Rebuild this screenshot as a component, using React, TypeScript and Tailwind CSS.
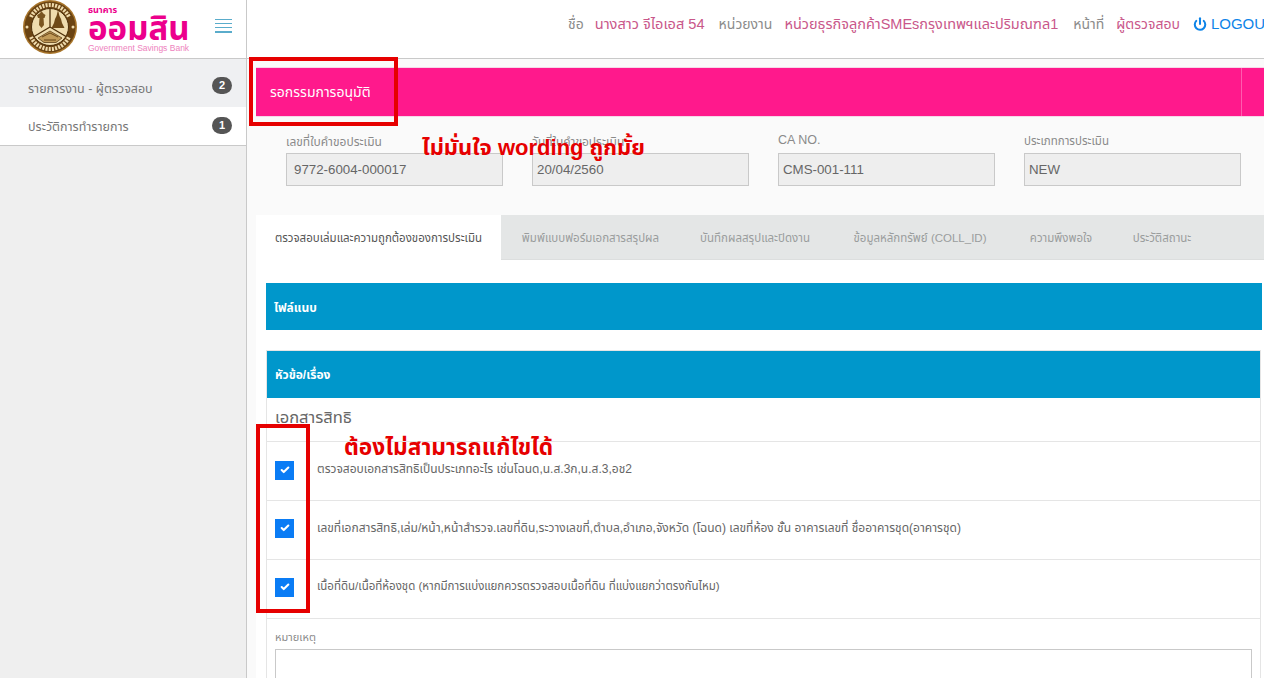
import { FC } from 'react';
import { Check, Power } from 'lucide-react';

const FONT = '[font-family:"Liberation_Sans","Noto_Sans","Noto_Sans_Thai",sans-serif]';

const tabs = [
  { label: 'พิมพ์แบบฟอร์มเอกสารสรุปผล', width: 'w-[179px]' },
  { label: 'บันทึกผลสรุปและปิดงาน', width: 'w-[150px]' },
  { label: 'ข้อมูลหลักทรัพย์ (COLL_ID)', width: 'w-[180px]' },
  { label: 'ความพึงพอใจ', width: 'w-[102px]' },
  { label: 'ประวัติสถานะ', width: 'w-[100px]' },
];

const fields = [
  { label: 'เลขที่ใบคำขอประเมิน', value: '9772-6004-000017', labelCls: 'pt-[4px] text-[12px]', valueCls: 'pl-[7px]' },
  { label: 'วันที่ใบคำขอประเมิน', value: '20/04/2560', labelCls: 'pt-[4px] text-[12px]', valueCls: 'pl-[4px]' },
  { label: 'CA NO.', value: 'CMS-001-111', labelCls: 'pt-[2px] text-[12.500px]', valueCls: 'pl-[4px]' },
  { label: 'ประเภทการประเมิน', value: 'NEW', labelCls: 'pt-[3px] text-[11.500px]', valueCls: 'pl-[4px]' },
];

const checks = [
  { text: 'ตรวจสอบเอกสารสิทธิเป็นประเภทอะไร เช่นโฉนด,น.ส.3ก,น.ส.3,อช2', cls: 'text-[12px]' },
  { text: 'เลขที่เอกสารสิทธิ,เล่ม/หน้า,หน้าสำรวจ.เลขที่ดิน,ระวางเลขที่,ตำบล,อำเภอ,จังหวัด (โฉนด) เลขที่ห้อง ชั้น อาคารเลขที่ ชื่ออาคารชุด(อาคารชุด)', cls: 'text-[12px]' },
  { text: 'เนื้อที่ดิน/เนื้อที่ห้องชุด (หากมีการแบ่งแยกควรตรวจสอบเนื้อที่ดิน ที่แบ่งแยกว่าตรงกันไหม)', cls: 'text-[11.500px]' },
];

const Seal: FC = () => (
  <svg width="56" height="54" viewBox="0 0 56 54" className="shrink-0">
    <circle cx="28" cy="27" r="27" fill="#a8752b" />
    <circle cx="28" cy="27" r="25.500" fill="#6b4413" />
    <path d="M9 17a21 21 0 0 1 38 0" fill="none" stroke="#f0dcae" strokeWidth="4" strokeDasharray="2 1.200" />
    <path d="M9 37a21 21 0 0 0 38 0" fill="none" stroke="#f0dcae" strokeWidth="4" strokeDasharray="2 1.200" />
    <circle cx="5" cy="27" r="1.500" fill="#f0dcae" />
    <circle cx="51" cy="27" r="1.500" fill="#f0dcae" />
    <circle cx="28" cy="27" r="18.500" fill="#efdcae" stroke="#4e300b" strokeWidth="1" />
    <path d="M28 27V8.500M28 27L12 36.500M28 27L44 36.500" stroke="#4e300b" strokeWidth="1.300" fill="none" />
    {/* figure */}
    <path d="M19.500 11c1.200 2 2.500 3 4 4l-1 3h-1l.5 7-2.500 3-2.500-3 .5-7h-1.500l-1-3c2-1 3.500-2 4.500-4z" fill="#7a5520" />
    {/* pagoda */}
    <path d="M36 10l1.500 6 1.500 3 1 4 2.500 5h-13l2.500-5 1-4 1.500-3z" fill="#6f4a18" />
    {/* building */}
    <path d="M28 31l12 7-6 4.500h-12l-6-4.500z" fill="#c19a58" stroke="#4e300b" strokeWidth="0.700" />
    <path d="M20 37l8-4 8 4M22 40h12" fill="none" stroke="#5c3a10" strokeWidth="0.900" />
  </svg>
);

const Sidebar: FC = () => (
  <aside className="w-[247px] shrink-0 border-r border-[#c9c9c9] bg-[#efefef]">
    <div className="flex h-[59px] items-start border-b border-[#c9c9c9] bg-white pl-[22px]">
      <Seal />
      <div className="ml-[10px] w-[102px] shrink-0 leading-none text-[#ec008c]">
        <div className="mt-[6px] h-[9px] text-[9px] font-bold leading-[9px]">ธนาคาร</div>
        <div className="h-[26px] text-[33px] font-bold leading-[28px]">ออมสิน</div>
        <div className="mt-[3px] whitespace-nowrap text-[8.500px] leading-[9px] text-[#ee82bd]">Government Savings Bank</div>
      </div>
      <div className="ml-[25px] mt-[19px] flex w-[17px] flex-col gap-[3px]">
        <span className="h-px bg-[#5aaccb]" />
        <span className="h-px bg-[#5aaccb]" />
        <span className="h-px bg-[#5aaccb]" />
        <span className="h-[2px] bg-[#5aaccb]" />
      </div>
    </div>
    <div className="flex h-[48px] items-center justify-between bg-[#eff0f2] pl-[28px] pr-[14px] pt-[12px] text-[12.500px] text-[#777]">
      <span>รายการงาน - ผู้ตรวจสอบ</span>
      <span className="mb-[8px] flex h-[17px] w-[20px] items-center justify-center rounded-full bg-[#555] text-[11px] font-bold text-white">2</span>
    </div>
    <div className="flex h-[39px] items-center justify-between border-b border-[#c9c9c9] bg-white pl-[28px] pr-[14px] pt-[2px] text-[12.500px] text-[#777]">
      <span>ประวัติการทำรายการ</span>
      <span className="mb-[4px] flex h-[17px] w-[20px] items-center justify-center rounded-full bg-[#555] text-[11px] font-bold text-white">1</span>
    </div>
  </aside>
);

const TopBar: FC = () => (
  <header className="flex h-[59px] items-start overflow-hidden whitespace-nowrap border-b border-[#c9c9c9] bg-white pl-[321px] pt-[15px] text-[14px] leading-[18px] text-[#8b8b8b]">
    <span>ชื่อ</span>
    <span className="ml-[11px] text-[14.600px] text-[#c9578a]">นางสาว จีไอเอส 54</span>
    <span className="ml-[14px]">หน่วยงาน</span>
    <span className="ml-[12px] text-[14.500px] text-[#c9578a]">หน่วยธุรกิจลูกค้าSMEsกรุงเทพฯและปริมณฑล1</span>
    <span className="ml-[15px]">หน้าที่</span>
    <span className="ml-[12px] text-[#c9578a]">ผู้ตรวจสอบ</span>
    <span className="ml-[13px] flex shrink-0 items-center gap-[4px] text-[15px] text-[#0d84e8]">
      <Power size={14} strokeWidth={3.500} />
      LOGOUT
    </span>
  </header>
);

const Field: FC<{ label: string; value: string; labelCls: string; valueCls: string }> = ({ label, value, labelCls, valueCls }) => (
  <div className="w-[217px] shrink-0">
    <div className={`h-[23px] leading-[16px] text-[#8a8a8a] ${labelCls}`}>{label}</div>
    <div className={`flex h-[33px] items-center border border-[#c9c9c9] bg-[#eeeeee] text-[13.300px] text-[#666] ${valueCls}`}>
      {value}
    </div>
  </div>
);

const App: FC = () => {
  return (
    <div className={`relative flex h-[678px] w-[1264px] overflow-hidden bg-[#fafafa] ${FONT}`}>
      <Sidebar />
      <main className="min-w-0 flex-1">
        <TopBar />
        <div className="pl-[9px] pt-[8px]">
          <div className="flex h-[50px] items-center border-y border-[#f6d7e8] bg-[#ff198c] pl-[14px] pr-[22px] text-[14px] text-white">
            <span className="flex-1">รอกรรมการอนุมัติ</span>
            <span className="h-full w-px bg-[#ff5cae]" />
          </div>
          <div className="flex h-[98px] gap-[29px] pl-[30px] pt-[13px]">
            {fields.map((f) => (
              <Field key={f.label} {...f} />
            ))}
          </div>
          <div className="bg-white">
            <div className="flex h-[45px] border-b border-[#dcdede] bg-[#e4e6e6] pt-[3px] text-[11.500px]">
              <div className="-mt-[3px] -mb-px flex w-[245px] items-center justify-center whitespace-nowrap bg-white pt-[3px] text-[#555]">
                ตรวจสอบเล่มและความถูกต้องของการประเมิน
              </div>
              {tabs.map((t) => (
                <div key={t.label} className={`flex shrink-0 items-center justify-center whitespace-nowrap text-[#9a9d9d] ${t.width}`}>
                  {t.label}
                </div>
              ))}
            </div>
            <div className="pl-[10px] pr-[2px] pt-[23px]">
              <div className="flex h-[47px] items-center bg-[#0097cb] pl-[8px] pt-[2px] text-[12px] font-bold text-white">ไฟล์แนบ</div>
              <div className="mr-px mt-[20px] border border-[#e5e5e5]">
                <div className="flex h-[47px] items-center bg-[#0097cb] pl-[8px] text-[12px] font-bold text-white">หัวข้อ/เรื่อง</div>
                <div className="flex h-[44px] items-center border-b border-[#e5e5e5] pb-[4px] pl-[8px] text-[16.500px] text-[#666]">เอกสารสิทธิ</div>
                {checks.map((c, i) => (
                  <div key={c.text} className="flex h-[59px] items-center border-b border-[#e5e5e5] pl-[8px]">
                    <span className={`flex h-[19px] w-[19px] shrink-0 items-center justify-center bg-[#0a7cf5] text-white ${i === 0 ? 'mb-[2px]' : 'mb-[4px]'}`}>
                      <Check size={10} strokeWidth={5} />
                    </span>
                    <span className={`mb-[5px] ml-[23px] whitespace-nowrap text-[#666] ${c.cls}`}>{c.text}</span>
                  </div>
                ))}
                <div className="px-[8px] pt-[10px]">
                  <div className="h-[20px] text-[11px] leading-[16px] text-[#8a8a8a]">หมายเหตุ</div>
                  <div className="h-[60px] border border-[#c9c9c9] bg-white" />
                </div>
              </div>
            </div>
          </div>
        </div>
      </main>

      {/* review notes drawn over the page */}
      <div className="absolute left-[249px] top-[57px] h-[69px] w-[149px] border-[4px] border-[#e60000]" />
      <div className="absolute left-[256px] top-[424px] h-[189px] w-[54px] border-[4px] border-[#e60000]" />
      <div className="absolute left-[422px] top-[134px] whitespace-nowrap text-[22px] font-bold leading-[28px] text-[#e60000]">ไม่มั่นใจ wording ถูกมั้ย</div>
      <div className="absolute left-[344px] top-[433px] whitespace-nowrap text-[22.700px] font-bold leading-[28px] text-[#e60000]">ต้องไม่สามารถแก้ไขได้</div>
    </div>
  );
};

export default App;
